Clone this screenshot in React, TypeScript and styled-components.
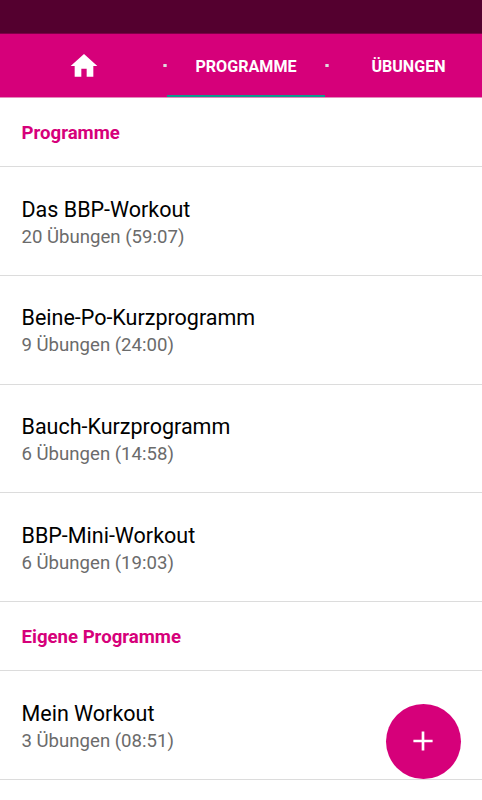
import React from "react";
import styled, { createGlobalStyle } from "styled-components";

const Global = createGlobalStyle`
  * { box-sizing: border-box; }
  html, body { margin: 0; background: #fff; }
  body { font-family: Roboto, sans-serif; overflow: hidden; }
`;
const Screen = styled.main`
  position: relative;
  width: 482px;
  height: 800px;
  overflow: hidden;
  background: #fff;
`;
const StatusBar = styled.div`
  height: 34px;
  background: #54002f;
  border-bottom: 1px solid #7e0048;
`;
const TabBar = styled.nav`
  display: grid;
  grid-template-columns: 167px 158px 167px;
  height: 64px;
  overflow: hidden;
  background: #d6007a;
  border-bottom: 1px solid #e48abb;
`;
const Tab = styled.a<{ $active?: boolean }>`
  position: relative;
  display: flex;
  align-items: center;
  justify-content: center;
  padding-top: 3px;
  color: #fff;
  font-size: 16.1px;
  font-weight: 700;
  border-bottom: 2px solid ${(p) => (p.$active ? "#0a9c8c" : "transparent")};
`;
const HomeIcon = styled.svg`
  width: 32px;
  height: 32px;
  margin-bottom: 1px;
  fill: #fff;
`;
const Dot = styled.i<{ $x: number }>`
  position: absolute;
  left: ${(p) => p.$x}px;
  top: 30px;
  width: 4px;
  height: 3px;
  background: #dcdcdc;
  border: solid #e28dbd;
  border-width: 0 1px;
`;
const SectionTitle = styled.h2`
  height: 69px;
  margin: 0;
  padding: 1px 21.5px 0;
  border-bottom: 1px solid #dcdcdc;
  color: #d6007a;
  font-size: 18.6px;
  font-weight: 700;
  line-height: 69.4px;
`;
const Row = styled.article`
  display: flex;
  flex-direction: column;
  height: 108.8px;
  padding: 28.6px 21.5px 0;
  border-bottom: 1px solid #dcdcdc;
`;
const Title = styled.div`
  color: #000;
  font-size: 21.5px;
  line-height: 27px;
`;
const Meta = styled.div`
  color: #6b6b6b;
  font-size: 18.6px;
  line-height: 28.4px;
`;
const AddButton = styled.button`
  position: absolute;
  left: 385.5px;
  top: 703.5px;
  display: grid;
  place-items: center;
  width: 75px;
  height: 75px;
  padding: 0;
  border: 0;
  border-radius: 50%;
  background: #d6007a;
`;

const programs = [
  ["Das BBP-Workout", "20 Übungen (59:07)"],
  ["Beine-Po-Kurzprogramm", "9 Übungen (24:00)"],
  ["Bauch-Kurzprogramm", "6 Übungen (14:58)"],
  ["BBP-Mini-Workout", "6 Übungen (19:03)"],
];
const ownPrograms = [["Mein Workout", "3 Übungen (08:51)"]];

function ProgramList({ items }: { items: string[][] }) {
  return (
    <>
      {items.map(([title, meta]) => (
        <Row key={title}>
          <Title>{title}</Title>
          <Meta>{meta}</Meta>
        </Row>
      ))}
    </>
  );
}

export default function App() {
  return (
    <Screen>
      <Global />
      <StatusBar />
      <TabBar>
        <Tab>
          <HomeIcon viewBox="0 0 24 24">
            <path d="M10 20v-6h4v6h5v-8h3L12 3 2 12h3v8z" />
          </HomeIcon>
          <Dot $x={163} />
        </Tab>
        <Tab $active>PROGRAMME</Tab>
        <Tab>
          <Dot $x={0} />
          ÜBUNGEN
        </Tab>
      </TabBar>
      <SectionTitle>Programme</SectionTitle>
      <ProgramList items={programs} />
      <SectionTitle>Eigene Programme</SectionTitle>
      <ProgramList items={ownPrograms} />
      <AddButton aria-label="Neu">
        <svg width="32" height="32" viewBox="0 0 24 24" fill="#fff">
          <path d="M19.2 13h-6.2v6.2h-2V13H4.8v-2H11V4.8h2V11h6.2z" />
        </svg>
      </AddButton>
    </Screen>
  );
}
